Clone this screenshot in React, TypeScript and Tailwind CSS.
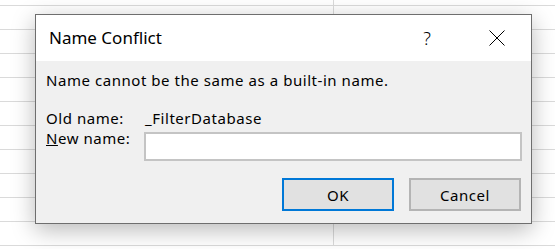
import React from 'react';

const rows = Array.from({ length: 10 });

function CloseIcon() {
    return (
        <svg width="16" height="16" viewBox="0 0 16 16" className="block">
            <path d="M0.5 0.5 L15.5 15.5 M15.5 0.5 L0.5 15.5" stroke="#000" strokeWidth="1" fill="none" />
        </svg>
    );
}

export default function App() {
    return (
        <div className="relative w-[555px] h-[249px] overflow-hidden bg-white font-['Noto_Sans',sans-serif] text-black">
            {/* Sheet grid behind the dialog */}
            <div className="flex flex-col">
                <div className="flex h-[6px] border-b border-[#dadada]">
                    <div className="w-[334px] border-r border-[#dadada]" />
                </div>
                {rows.map((_, i) => (
                    <div key={i} className="flex h-[24px] shrink-0 border-b border-[#dadada]">
                        <div className="w-[334px] border-r border-[#dadada]" />
                    </div>
                ))}
            </div>

            {/* Dialog */}
            <div className="absolute left-[35px] top-[14px] w-[497px] h-[210px] border border-[#6e6e6e] bg-[#f0f0f0] shadow-[0_6px_22px_rgba(0,0,0,0.28)] flex flex-col">
                {/* Title bar */}
                <div className="h-[46px] bg-white flex items-center pl-[13px] pr-[26px]">
                    <span className="text-[17px] leading-[24px]">Name Conflict</span>
                    <div className="flex-1" />
                    <span className="text-[18px] leading-[24px] font-light">?</span>
                    <div className="w-[58px]" />
                    <CloseIcon />
                </div>

                {/* Body */}
                <div className="flex-1 flex flex-col pt-[9px] pl-[10px] pr-[9px] text-[15px] leading-[20px] tracking-[0.55px]">
                    <p>Name cannot be the same as a built-in name.</p>

                    <div className="grid grid-cols-[98px_1fr] mt-[18px]">
                        <span className="h-[20px]">Old name:</span>
                        <span className="h-[20px] pl-px">_FilterDatabase</span>
                        <span>
                            <span className="underline">N</span>ew name:
                        </span>
                        <input
                            type="text"
                            className="mt-[4px] h-[29px] bg-white border-2 border-[#c4c4c4] outline-none"
                        />
                    </div>

                    <div className="flex justify-end gap-[15px] mt-[17px] pr-px">
                        <button className="w-[112px] h-[33px] bg-[#e1e1e1] border-2 border-[#0078d7]">OK</button>
                        <button className="w-[112px] h-[33px] bg-[#e1e1e1] border-2 border-[#b4b4b4]">Cancel</button>
                    </div>
                </div>
            </div>
        </div>
    );
}
